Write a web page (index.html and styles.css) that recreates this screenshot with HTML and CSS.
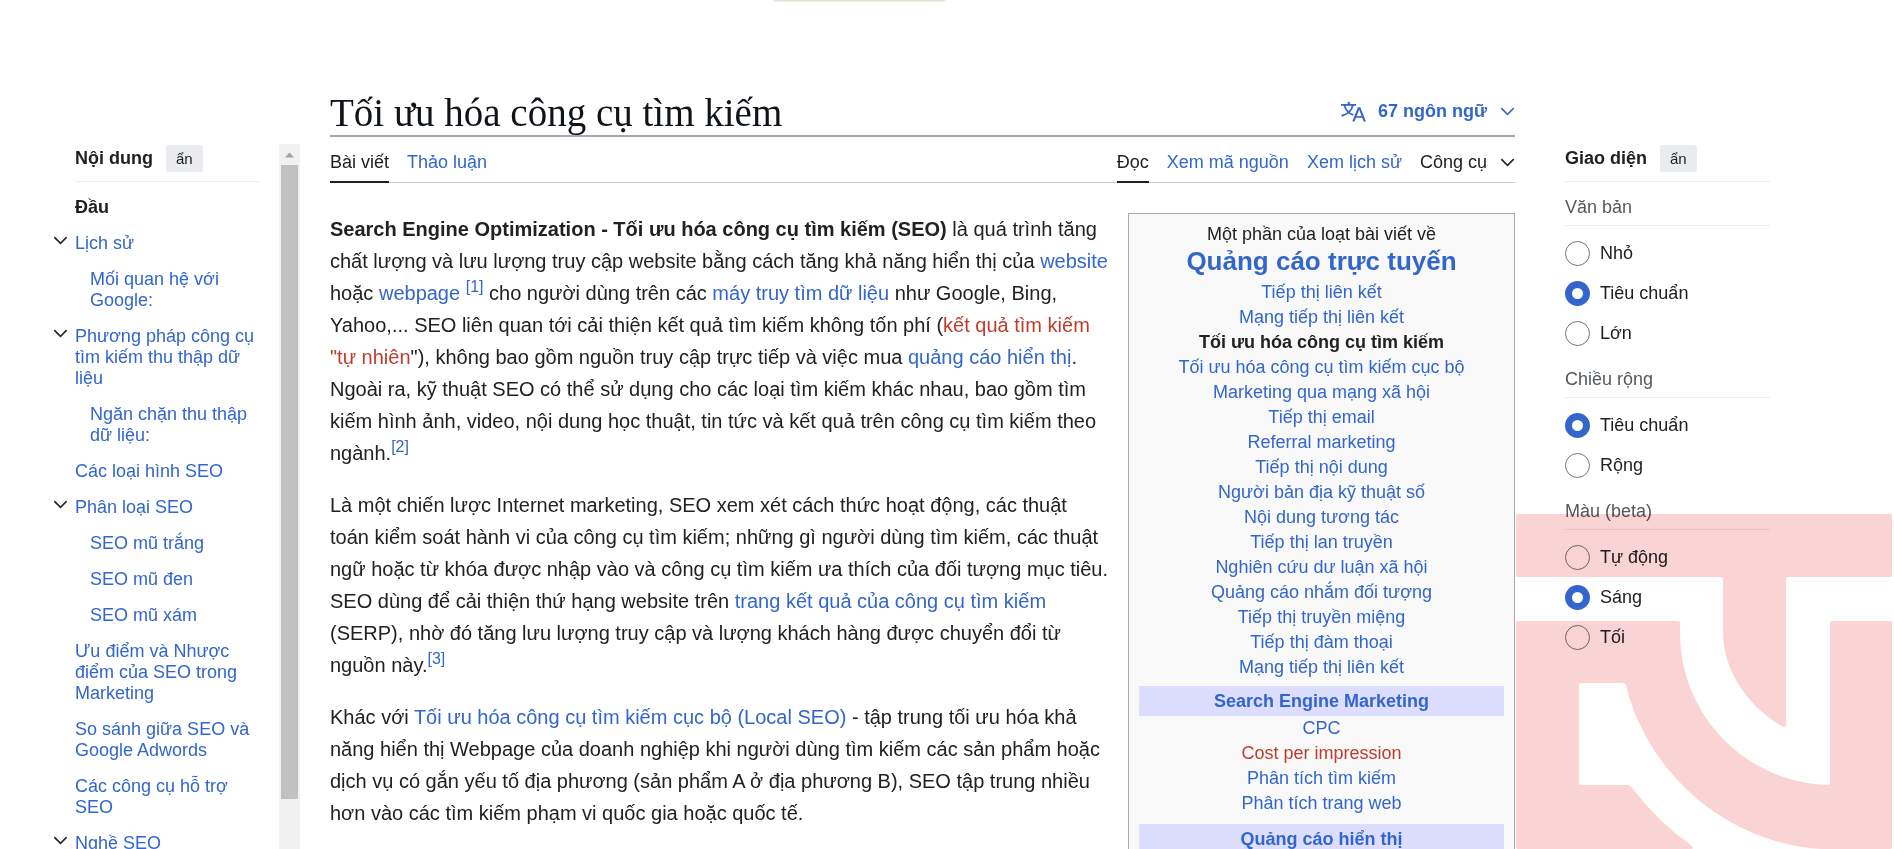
FILE: index.html
```html
<!DOCTYPE html>
<html lang="vi">
<head>
<meta charset="utf-8">
<title>Tối ưu hóa công cụ tìm kiếm</title>
<link rel="stylesheet" href="styles.css">
</head>
<body>
<svg class="defs" aria-hidden="true">
  <symbol id="chevron" viewBox="0 0 20 20"><path d="m17.5 4.75-7.5 7.5-7.5-7.5L1 6.25l9 9 9-9z"/></symbol>
</svg>
<div class="tooltip-edge"></div>
<div class="page">
  <aside class="toc-panel">
    <nav class="toc" aria-label="Nội dung">
      <div class="panel-head"><h2>Nội dung</h2><button type="button" class="hide-btn">ẩn</button></div>
      <ul class="toc-list">
        <li><a class="current" href="#">Đầu</a></li>
        <li><button type="button" class="toggle" aria-label="Thu gọn Lịch sử"><svg><use href="#chevron"/></svg></button><a href="#">Lịch sử</a>
          <ul><li><a href="#">Mối quan hệ với Google:</a></li></ul></li>
        <li><button type="button" class="toggle" aria-label="Thu gọn Phương pháp"><svg><use href="#chevron"/></svg></button><a href="#">Phương pháp công cụ tìm kiếm thu thập dữ liệu</a>
          <ul><li><a href="#">Ngăn chặn thu thập dữ liệu:</a></li></ul></li>
        <li><a href="#">Các loại hình SEO</a></li>
        <li><button type="button" class="toggle" aria-label="Thu gọn Phân loại SEO"><svg><use href="#chevron"/></svg></button><a href="#">Phân loại SEO</a>
          <ul>
            <li><a href="#">SEO mũ trắng</a></li>
            <li><a href="#">SEO mũ đen</a></li>
            <li><a href="#">SEO mũ xám</a></li>
          </ul></li>
        <li><a href="#">Ưu điểm và Nhược điểm của SEO trong Marketing</a></li>
        <li><a href="#">So sánh giữa SEO và Google Adwords</a></li>
        <li><a href="#">Các công cụ hỗ trợ SEO</a></li>
        <li><button type="button" class="toggle" aria-label="Thu gọn Nghề SEO"><svg><use href="#chevron"/></svg></button><a href="#">Nghề SEO</a></li>
      </ul>
    </nav>
    <div class="scrollbar" aria-hidden="true">
      <svg class="scroll-arrow" viewBox="0 0 21 21"><path d="M6 13.500h9L10.500 8.500z"/></svg>
      <div class="scroll-thumb"></div>
    </div>
  </aside>

  <main class="article">
    <header class="title-row">
      <h1>Tối ưu hóa công cụ tìm kiếm</h1>
      <button type="button" class="lang-btn">
        <svg class="lang-icon" viewBox="0 0 20 20"><path d="M20 18h-1.440a.6.6 0 0 1-.4-.12.8.8 0 0 1-.23-.31L17 15h-5l-1 2.540a.8.8 0 0 1-.22.3.6.6 0 0 1-.4.140H9l4.550-11.470h1.890zm-3.530-4.310L14.890 9.500a12 12 0 0 1-.39-1.240q-.09.370-.19.690l-.19.560-1.580 4.190zm-6.300-1.580a13.400 13.400 0 0 1-2.910-1.410 11.460 11.460 0 0 0 2.810-5.370H12V4H7.310a4 4 0 0 0-.2-.56C6.870 2.790 6.600 2 6.600 2l-1.470.5s.4.890.6 1.500H0v1.330h2.150A11.230 11.230 0 0 0 5 10.700a17.200 17.200 0 0 1-5 2.100q.56.820.870 1.380a23.300 23.300 0 0 0 5.220-2.510 15.600 15.600 0 0 0 3.560 1.770zM3.630 5.330h4.910a8.100 8.100 0 0 1-2.450 4.450 9.100 9.100 0 0 1-2.460-4.450"/></svg>
        <span>67 ngôn ngữ</span>
        <svg class="chev"><use href="#chevron"/></svg>
      </button>
    </header>
    <nav class="tabs" aria-label="Trang">
      <div class="tab-group">
        <a class="tab active" href="#">Bài viết</a>
        <a class="tab" href="#">Thảo luận</a>
      </div>
      <div class="tab-group">
        <a class="tab active" href="#">Đọc</a>
        <a class="tab" href="#">Xem mã nguồn</a>
        <a class="tab" href="#">Xem lịch sử</a>
        <button type="button" class="tab tools">Công cụ <svg class="chev"><use href="#chevron"/></svg></button>
      </div>
    </nav>
    <div class="body-text">
      <div class="series">
      <table>
        <tbody>
          <tr><td class="series-pre">Một phần của loạt bài viết về</td></tr>
          <tr><th class="series-title"><a href="#">Quảng cáo trực tuyến</a></th></tr>
          <tr><td class="series-intro"><ul>
            <li><a href="#">Tiếp thị liên kết</a></li>
            <li><a href="#">Mạng tiếp thị liên kết</a></li>
            <li><strong>Tối ưu hóa công cụ tìm kiếm</strong></li>
            <li><a href="#">Tối ưu hóa công cụ tìm kiếm cục bộ</a></li>
            <li><a href="#">Marketing qua mạng xã hội</a></li>
            <li><a href="#">Tiếp thị email</a></li>
            <li><a href="#">Referral marketing</a></li>
            <li><a href="#">Tiếp thị nội dung</a></li>
            <li><a href="#">Người bản địa kỹ thuật số</a></li>
            <li><a href="#">Nội dung tương tác</a></li>
            <li><a href="#">Tiếp thị lan truyền</a></li>
            <li><a href="#">Nghiên cứu dư luận xã hội</a></li>
            <li><a href="#">Quảng cáo nhắm đối tượng</a></li>
            <li><a href="#">Tiếp thị truyền miệng</a></li>
            <li><a href="#">Tiếp thị đàm thoại</a></li>
            <li><a href="#">Mạng tiếp thị liên kết</a></li>
          </ul></td></tr>
          <tr><th class="series-band"><a href="#">Search Engine Marketing</a></th></tr>
          <tr><td class="series-group"><ul>
            <li><a href="#">CPC</a></li>
            <li><a class="missing" href="#">Cost per impression</a></li>
            <li><a href="#">Phân tích tìm kiếm</a></li>
            <li><a href="#">Phân tích trang web</a></li>
          </ul></td></tr>
          <tr><th class="series-band"><a href="#">Quảng cáo hiển thị</a></th></tr>
        </tbody>
      </table>
      </div>
      <p><b>Search Engine Optimization - Tối ưu hóa công cụ tìm kiếm (SEO)</b> là quá trình tăng chất lượng và lưu lượng truy cập website bằng cách tăng khả năng hiển thị của <a href="#">website</a> hoặc <a href="#">webpage</a> <sup><a href="#">[1]</a></sup> cho người dùng trên các <a href="#">máy truy tìm dữ liệu</a> như Google, Bing, Yahoo,... SEO liên quan tới cải thiện kết quả tìm kiếm không tốn phí (<a class="missing" href="#">kết quả tìm kiếm "tự nhiên</a>"), không bao gồm nguồn truy cập trực tiếp và việc mua <a href="#">quảng cáo hiển thị</a>. Ngoài ra, kỹ thuật SEO có thể sử dụng cho các loại tìm kiếm khác nhau, bao gồm tìm kiếm hình ảnh, video, nội dung học thuật, tin tức và kết quả trên công cụ tìm kiếm theo ngành.<sup><a href="#">[2]</a></sup></p>
      <p>Là một chiến lược Internet marketing, SEO xem xét cách thức hoạt động, các thuật toán kiểm soát hành vi của công cụ tìm kiếm; những gì người dùng tìm kiếm, các thuật ngữ hoặc từ khóa được nhập vào và công cụ tìm kiếm ưa thích của đối tượng mục tiêu. SEO dùng để cải thiện thứ hạng website trên <a href="#">trang kết quả của công cụ tìm kiếm</a> (SERP), nhờ đó tăng lưu lượng truy cập và lượng khách hàng được chuyển đổi từ nguồn này.<sup><a href="#">[3]</a></sup></p>
      <p>Khác với <a href="#">Tối ưu hóa công cụ tìm kiếm cục bộ (Local SEO)</a> - tập trung tối ưu hóa khả năng hiển thị Webpage của doanh nghiệp khi người dùng tìm kiếm các sản phẩm hoặc dịch vụ có gắn yếu tố địa phương (sản phẩm A ở địa phương B), SEO tập trung nhiều hơn vào các tìm kiếm phạm vi quốc gia hoặc quốc tế.</p>
    </div>
  </main>

  <aside class="appearance">
    <div class="panel-head"><h2>Giao diện</h2><button type="button" class="hide-btn">ẩn</button></div>
    <fieldset>
      <legend>Văn bản</legend>
      <label><input type="radio" name="text">Nhỏ</label>
      <label><input type="radio" name="text" checked>Tiêu chuẩn</label>
      <label><input type="radio" name="text">Lớn</label>
    </fieldset>
    <fieldset>
      <legend>Chiều rộng</legend>
      <label><input type="radio" name="width" checked>Tiêu chuẩn</label>
      <label><input type="radio" name="width">Rộng</label>
    </fieldset>
    <fieldset>
      <legend>Màu (beta)</legend>
      <label><input type="radio" name="color">Tự động</label>
      <label><input type="radio" name="color" checked>Sáng</label>
      <label><input type="radio" name="color">Tối</label>
    </fieldset>
  </aside>
</div>
<svg class="watermark" viewBox="0 0 376 335" aria-hidden="true">
  <path d="M2 0H374Q376 0 376 2V61Q376 63 374 63H272Q270 63 270 65V211Q270 214 266 212C229 191 207 153 207 119V65Q207 63 205 63H2Q0 63 0 61V2Q0 0 2 0Z"/>
  <path d="M2 107H162Q164 107 164 109V119C164 203 232 269 312 271Q314 271 314 269V109Q314 107 316 107H374Q376 107 376 109V333Q376 335 374 335H306C214 330 132 262 110 171Q109 169 107 169H65Q63 169 63 171V269Q63 271 65 271H111Q114 271 117 275Q142 308 176 332Q178 335 175 335H2Q0 335 0 333V109Q0 107 2 107Z"/>
</svg>
</body>
</html>
```

FILE: styles.css
```css
* { box-sizing: border-box; }

body {
  margin: 0;
  height: 100vh;
  overflow: hidden;
  position: relative;
  background: #fff;
  color: #202122;
  font: 18px/21px "Liberation Sans", Arial, sans-serif;
}

a { color: #3366cc; text-decoration: none; }
a.missing { color: #bf3c2c; }
ul { list-style: none; margin: 0; padding: 0; }
button { font: inherit; color: inherit; border: 0; background: none; padding: 0; cursor: pointer; }
svg { fill: currentColor; }
.defs { display: none; }

.page {
  height: 100%;
  display: grid;
  grid-template-columns: 247px minmax(0, 1fr) 205px;
  grid-template-rows: minmax(0, 1fr);
  padding-left: 53px;
  padding-right: 124px;
}

.tooltip-edge {
  position: absolute;
  top: -10px;
  left: 773px;
  width: 173px;
  height: 11px;
  border-radius: 4px;
  background: #e0e2d0;
  box-shadow: 0 0 2px #c9ccb0;
}

/* Side panels */
.toc-panel { display: flex; padding-top: 144px; }
.toc { flex: 1; min-width: 0; padding-left: 22px; padding-right: 20px; }
.panel-head {
  display: flex;
  align-items: center;
  gap: 13px;
  padding: 1px 0 9px;
  border-bottom: 1px solid #eaecf0;
}
.panel-head h2 { margin: 0; font-size: 18px; line-height: 27px; }
.hide-btn {
  height: 27px;
  padding: 0 10px;
  border-radius: 2px;
  background: #eaecf0;
  font-size: 15px;
}

.toc-list { padding-top: 8px; }
.toc-list li { position: relative; }
.toc-list a { display: block; padding: 7px 0 8px; }
.toc-list ul { padding-left: 15px; }
.toc-list .current { color: #202122; font-weight: bold; }
.toggle { position: absolute; left: -22px; top: 7px; width: 15px; height: 15px; }
.toggle svg { display: block; width: 15px; height: 15px; }

.scrollbar { width: 21px; background: #f1f1f1; }
.scroll-arrow { display: block; width: 21px; height: 21px; fill: #a3a3a3; }
.scroll-thumb { height: 90%; max-height: 634px; margin: 0 2px; background: #c1c1c1; }

/* Article */
.article { padding-left: 30px; padding-right: 50px; padding-top: 91px; }
.title-row {
  display: flex;
  justify-content: space-between;
  align-items: center;
  border-bottom: 2px solid #a2a9b1;
}
.title-row h1 {
  margin: 0;
  font: 39px/44px "Liberation Serif", "Times New Roman", serif;
  color: #101418;
}
.lang-btn { display: flex; align-items: center; padding-bottom: 4px; color: #3366cc; font-weight: bold; }
.lang-icon { width: 25px; height: 25px; margin-right: 12px; }
.chev { width: 15px; height: 15px; margin-left: 13px; }

.tabs { display: flex; justify-content: space-between; border-bottom: 1px solid #c8ccd1; }
.tab-group { display: flex; gap: 18px; margin-bottom: -1px; }
.tab { padding: 15px 0 8px; border-bottom: 2px solid transparent; }
.tab.active { color: #202122; border-bottom-color: #202122; }
.tools { display: flex; align-items: center; }

.body-text { margin-top: 30px; font-size: 20px; line-height: 32px; }
.body-text p { margin: 0 0 20px; }
sup { font-size: 16px; line-height: 1; }

.series {
  float: right;
  width: 387px;
  margin: 0 0 10px 18px;
  padding: 8px 10px;
  border: 1px solid #aaa;
  background: #f9f9f9;
  font-size: 18px;
  line-height: 25px;
  text-align: center;
}
.series table { width: 100%; border-spacing: 0; }
.series th, .series td { padding: 0; }
.series .series-title { font-size: 26px; line-height: 28px; }
.series .series-intro { padding: 5px 0 6px; }
.series .series-group { padding-bottom: 8px; }
.series .series-band { height: 30px; background: #ddf; }

/* Appearance */
.appearance { padding-top: 144px; }
fieldset { display: flex; flex-direction: column; border: 0; margin: 0 0 8px; padding: 0; gap: 15px; }
legend {
  width: 100%;
  margin-bottom: 15px;
  padding: 13px 0 6px;
  border-bottom: 1px solid #eaecf0;
  color: #54595d;
  line-height: 24px;
}
label { display: flex; align-items: center; gap: 10px; }
input[type="radio"] {
  appearance: none;
  width: 25px;
  height: 25px;
  margin: 0;
  border: 1px solid #72777d;
  border-radius: 50%;
  background: #fff;
}
input[type="radio"]:checked { border: 7px solid #3366cc; }

.watermark {
  position: absolute;
  right: 2px;
  bottom: 0;
  width: 376px;
  height: 335px;
  fill: #fad3d4;
  mix-blend-mode: multiply;
  pointer-events: none;
}
```
